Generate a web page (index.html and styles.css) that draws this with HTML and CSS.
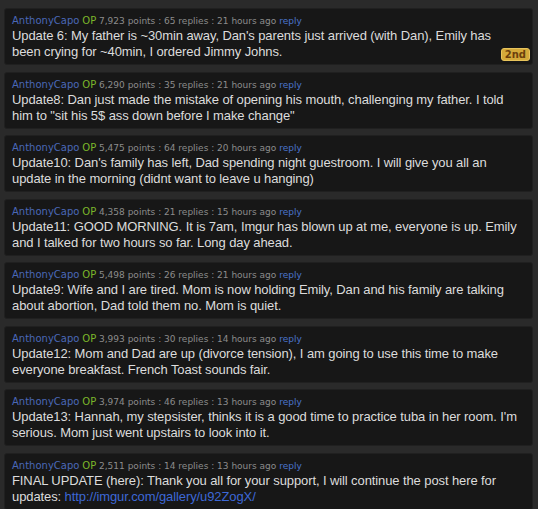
FILE: index.html
```html
<!DOCTYPE html>
<html>
<head>
<meta charset="utf-8">
<link rel="stylesheet" href="styles.css">
</head>
<body>
<div class="list">
  <div class="card">
    <div class="meta"><span class="user">AnthonyCapo</span> <span class="op">OP</span> 7,923 points : 65 replies : 21 hours ago <span class="reply">reply</span></div>
    <div class="text">Update 6: My father is ~30min away, Dan's parents just arrived (with Dan), Emily has<br>been crying for ~40min, I ordered Jimmy Johns.</div>
    <span class="badge">2nd</span>
  </div>
  <div class="card">
    <div class="meta"><span class="user">AnthonyCapo</span> <span class="op">OP</span> 6,290 points : 35 replies : 21 hours ago <span class="reply">reply</span></div>
    <div class="text">Update8: Dan just made the mistake of opening his mouth, challenging my father. I told<br>him to "sit his 5$ ass down before I make change"</div>
  </div>
  <div class="card">
    <div class="meta"><span class="user">AnthonyCapo</span> <span class="op">OP</span> 5,475 points : 64 replies : 20 hours ago <span class="reply">reply</span></div>
    <div class="text">Update10: Dan's family has left, Dad spending night guestroom. I will give you all an<br>update in the morning (didnt want to leave u hanging)</div>
  </div>
  <div class="card">
    <div class="meta"><span class="user">AnthonyCapo</span> <span class="op">OP</span> 4,358 points : 21 replies : 15 hours ago <span class="reply">reply</span></div>
    <div class="text">Update11: GOOD MORNING. It is 7am, Imgur has blown up at me, everyone is up. Emily<br>and I talked for two hours so far. Long day ahead.</div>
  </div>
  <div class="card">
    <div class="meta"><span class="user">AnthonyCapo</span> <span class="op">OP</span> 5,498 points : 26 replies : 21 hours ago <span class="reply">reply</span></div>
    <div class="text">Update9: Wife and I are tired. Mom is now holding Emily, Dan and his family are talking<br>about abortion, Dad told them no. Mom is quiet.</div>
  </div>
  <div class="card">
    <div class="meta"><span class="user">AnthonyCapo</span> <span class="op">OP</span> 3,993 points : 30 replies : 14 hours ago <span class="reply">reply</span></div>
    <div class="text">Update12: Mom and Dad are up (divorce tension), I am going to use this time to make<br>everyone breakfast. French Toast sounds fair.</div>
  </div>
  <div class="card">
    <div class="meta"><span class="user">AnthonyCapo</span> <span class="op">OP</span> 3,974 points : 46 replies : 13 hours ago <span class="reply">reply</span></div>
    <div class="text">Update13: Hannah, my stepsister, thinks it is a good time to practice tuba in her room. I'm<br>serious. Mom just went upstairs to look into it.</div>
  </div>
  <div class="card">
    <div class="meta"><span class="user">AnthonyCapo</span> <span class="op">OP</span> 2,511 points : 14 replies : 13 hours ago <span class="reply">reply</span></div>
    <div class="text">FINAL UPDATE (here): Thank you all for your support, I will continue the post here for<br>updates: <a class="link" href="#">http://imgur.com/gallery/u92ZogX/</a></div>
  </div>
</div>
</body>
</html>
```
FILE: styles.css
```css
html, body {
  margin: 0;
  padding: 0;
  background: #2a2a2a;
}
.list {
  display: flex;
  flex-direction: column;
  gap: 6.5px;
  padding: 8px 5px 0 4px;
}
.card {
  position: relative;
  background: #171717;
  border: 1px solid #202020;
  border-radius: 3px;
  padding: 5px 8px 4px 7px;
}
.meta {
  font-family: "DejaVu Sans", Verdana, sans-serif;
  font-size: 9px;
  line-height: 14px;
  color: #8c8c8c;
  white-space: nowrap;
}
.user {
  color: #4a68b8;
  font-size: 10px;
}
.op {
  color: #7cb52a;
  font-size: 10px;
}
.reply {
  color: #4a74cc;
}
.text {
  font-family: "Liberation Sans", Arial, sans-serif;
  font-size: 13px;
  line-height: 16px;
  letter-spacing: -0.1px;
  color: #dcdcdc;
  white-space: nowrap;
}
.link {
  color: #3d68d6;
  text-decoration: none;
}
.badge {
  position: absolute;
  right: 2px;
  bottom: 3px;
  background: #d4a93a;
  border: 1px solid #e8c45c;
  border-radius: 3px;
  color: #6a3e0c;
  font-family: "DejaVu Sans", Verdana, sans-serif;
  font-size: 10px;
  font-weight: bold;
  line-height: 11px;
  padding: 0 3px;
}
```
